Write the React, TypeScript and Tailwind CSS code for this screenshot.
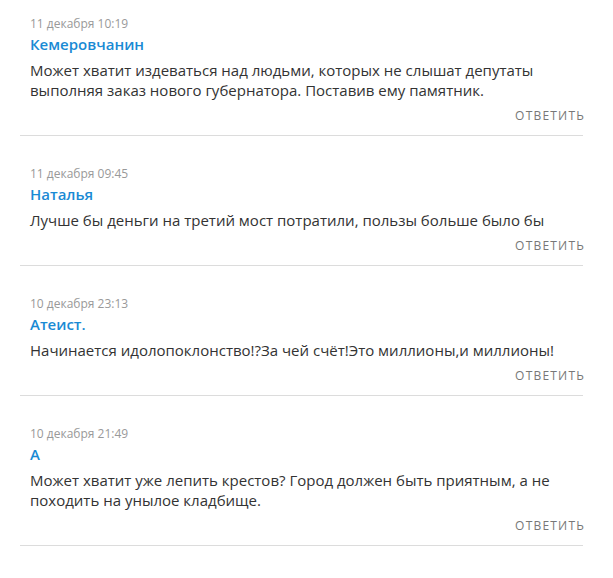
const comments = [
    {
        date: "11 декабря 10:19",
        author: "Кемеровчанин",
        text: "Может хватит издеваться над людьми, которых не слышат депутаты выполняя заказ нового губернатора. Поставив ему памятник.",
    },
    {
        date: "11 декабря 09:45",
        author: "Наталья",
        text: "Лучше бы деньги на третий мост потратили, пользы больше было бы",
    },
    {
        date: "10 декабря 23:13",
        author: "Атеист.",
        text: "Начинается идолопоклонство!?За чей счёт!Это миллионы,и миллионы!",
    },
    {
        date: "10 декабря 21:49",
        author: "А",
        text: "Может хватит уже лепить крестов? Город должен быть приятным, а не походить на унылое кладбище.",
    },
];

export default function App() {
    return (
        <div className="bg-white px-5 w-[603px]" style={{ fontFamily: '"Open Sans", sans-serif' }}>
            {comments.map((c, i) => (
                <div
                    key={i}
                    className={`border-b border-[#dcdcdc] pb-[11px] ${i === 0 ? "pt-[16px]" : "pt-[30px]"}`}
                >
                    <div className="pl-[10px]">
                        <div className="text-[12px] leading-4 text-[#999]">{c.date}</div>
                        <div className="mt-[2px] text-[15px] leading-5 font-semibold text-[#1a8ad4]">{c.author}</div>
                        {/* wrap point matches the original column width */}
                        <p className="mt-[6px] text-[15px] leading-5 text-[#333] max-w-[540px]">{c.text}</p>
                    </div>
                    <div className="mt-[8px] mr-[-2px] text-right text-[12px] leading-4 tracking-[0.1em] text-[#777]">
                        ОТВЕТИТЬ
                    </div>
                </div>
            ))}
        </div>
    );
}
